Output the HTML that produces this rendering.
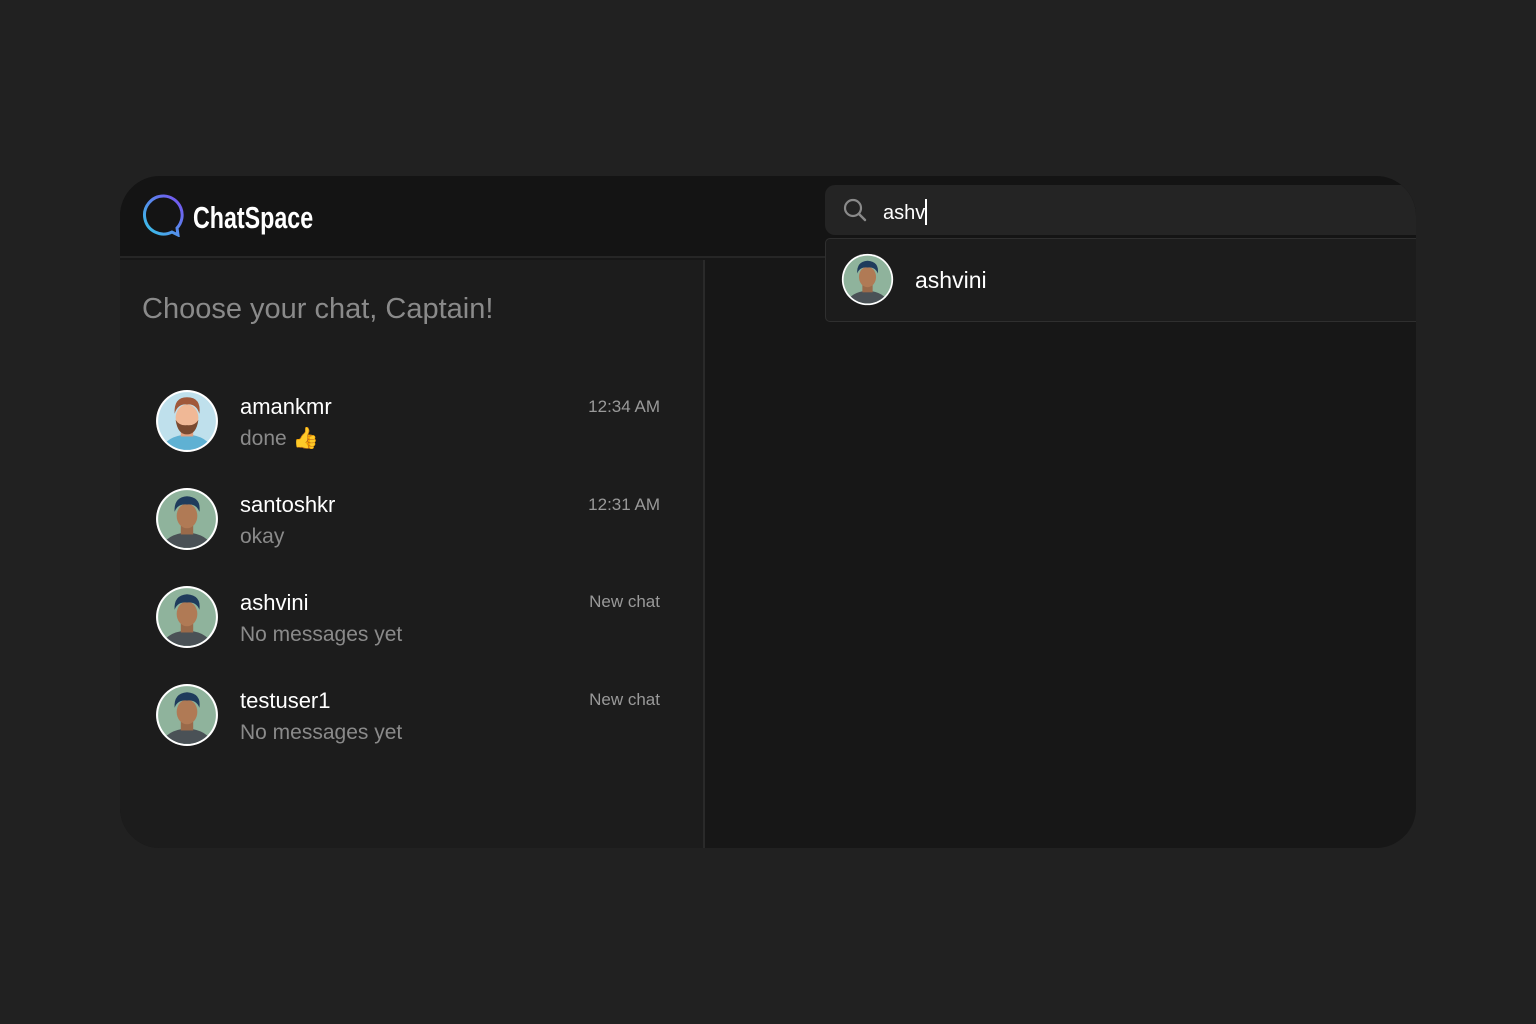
<!DOCTYPE html>
<html><head><meta charset="utf-8"><style>
*{margin:0;padding:0;box-sizing:border-box}
body{width:1536px;height:1024px;background:#212121;font-family:"Liberation Sans",sans-serif;position:relative;overflow:hidden}
.card{position:absolute;left:120px;top:176px;width:1296px;height:672px;border-radius:40px;overflow:hidden;background:#171717}
.hdr{position:absolute;left:0;top:0;width:1296px;height:82px;background:#141414;border-bottom:2px solid #262626}
.left{position:absolute;left:0;top:84px;width:585px;height:588px;background:#1c1c1c;border-right:2px solid #2a2a2a}
.logo{position:absolute;left:22px;top:17px}
.brand{position:absolute;left:73px;top:24px;color:#fff;font-size:31px;font-weight:bold;transform:scaleX(.75);transform-origin:left}
.title{position:absolute;left:22px;top:114px;color:#8a8a8a;font-size:29px}
.item{position:absolute;left:36px;width:504px;height:64px}
.av{position:absolute;left:-1px;top:-1px;width:64px;height:64px}
.nm{position:absolute;left:84px;top:4px;color:#fff;font-size:22px}
.ms{position:absolute;left:84px;top:37px;color:#8a8a8a;font-size:21px}
.tm{position:absolute;right:0;top:7px;color:#999;font-size:17px}
.search{position:absolute;left:825px;top:185px;width:600px;height:50px;background:#242424;border-radius:10px}
.drop{position:absolute;left:825px;top:238px;width:600px;height:84px;background:#1c1c1c;border:1px solid #2f2f2f;border-radius:5px}
</style></head><body>
<svg width="0" height="0" style="position:absolute"><defs>
<symbol id="a2" viewBox="0 0 62 62"><circle cx="31" cy="31" r="30" fill="#fff"/><circle cx="31" cy="31" r="28" fill="#8fb39c"/><clipPath id="c2"><circle cx="31" cy="31" r="28"/></clipPath><g clip-path="url(#c2)"><path d="M6 62 Q8 46 31 44 Q54 46 56 62Z" fill="#4a5156"/><rect x="25" y="36" width="12" height="10" fill="#9a6a4a"/><ellipse cx="31" cy="28" rx="10" ry="12" fill="#b07a55"/><path d="M19 24 Q18 10 31 9 Q45 10 43 24 Q40 16 31 17 Q22 16 19 24Z" fill="#1f3b5c"/></g></symbol>
<symbol id="a1" viewBox="0 0 62 62"><circle cx="31" cy="31" r="30" fill="#fff"/><circle cx="31" cy="31" r="28" fill="#bfe0ec"/><clipPath id="c1"><circle cx="31" cy="31" r="28"/></clipPath><g clip-path="url(#c1)"><path d="M6 62 Q8 46 31 44 Q54 46 56 62Z" fill="#5fb1d3"/><rect x="25" y="36" width="12" height="10" fill="#e0a080"/><ellipse cx="31" cy="28" rx="11" ry="13" fill="#f0b896"/><path d="M20 30 Q22 44 31 44 Q40 44 42 30 Q38 36 31 35 Q24 36 20 30Z" fill="#7a4a30"/><path d="M19 24 Q18 8 31 8 Q45 8 43 24 Q40 14 31 15 Q22 14 19 24Z" fill="#a0583a"/></g></symbol>
</defs></svg>
<div class="card">
<div class="hdr">
<svg class="logo" width="44" height="44" viewBox="0 0 44 44"><defs><linearGradient id="g" x1="0" y1="1" x2="1" y2="0"><stop offset="0" stop-color="#35c8e8"/><stop offset="1" stop-color="#7a4cf0"/></linearGradient></defs><path d="M22 3 A19 19 0 1 0 30 39 L36 42 L35 35 A19 19 0 0 0 22 3Z" fill="none" stroke="url(#g)" stroke-width="3"/></svg>
<div class="brand">ChatSpace</div>
</div>
<div class="left">
<div class="title" style="top:33px">Choose your chat, Captain!</div>
</div>
</div>
<div style="position:absolute;left:0;top:0">
<div class="item" style="left:156px;top:390px"><svg class="av"><use href="#a1"/></svg><div class="nm">amankmr</div><div class="ms">done <span style="color:#f4a623">👍</span></div><div class="tm">12:34 AM</div></div>
<div class="item" style="left:156px;top:488px"><svg class="av"><use href="#a2"/></svg><div class="nm">santoshkr</div><div class="ms">okay</div><div class="tm">12:31 AM</div></div>
<div class="item" style="left:156px;top:586px"><svg class="av"><use href="#a2"/></svg><div class="nm">ashvini</div><div class="ms">No messages yet</div><div class="tm" style="top:6px">New chat</div></div>
<div class="item" style="left:156px;top:684px"><svg class="av"><use href="#a2"/></svg><div class="nm">testuser1</div><div class="ms">No messages yet</div><div class="tm" style="top:6px">New chat</div></div>
</div>
<div style="position:absolute;left:825px;top:176px;width:591px;height:160px;overflow:hidden;border-top-right-radius:40px">
<div class="search" style="left:0;top:9px"><svg style="position:absolute;left:17px;top:12px" width="26" height="26" viewBox="0 0 26 26"><circle cx="11" cy="11" r="8" fill="none" stroke="#8a8a8a" stroke-width="2.2"/><path d="M17 17 L23 23" stroke="#8a8a8a" stroke-width="2.4" stroke-linecap="round"/></svg><div style="position:absolute;left:58px;top:14px;color:#fff;font-size:20px">ashv<span style="display:inline-block;width:2px;height:26px;background:#fff;vertical-align:-6px"></span></div></div>
<div class="drop" style="left:0;top:62px"><svg style="position:absolute;left:15px;top:14px" width="53" height="53"><use href="#a2"/></svg><div style="position:absolute;left:89px;top:28px;color:#fff;font-size:23px">ashvini</div></div>
</div>
</body></html>
